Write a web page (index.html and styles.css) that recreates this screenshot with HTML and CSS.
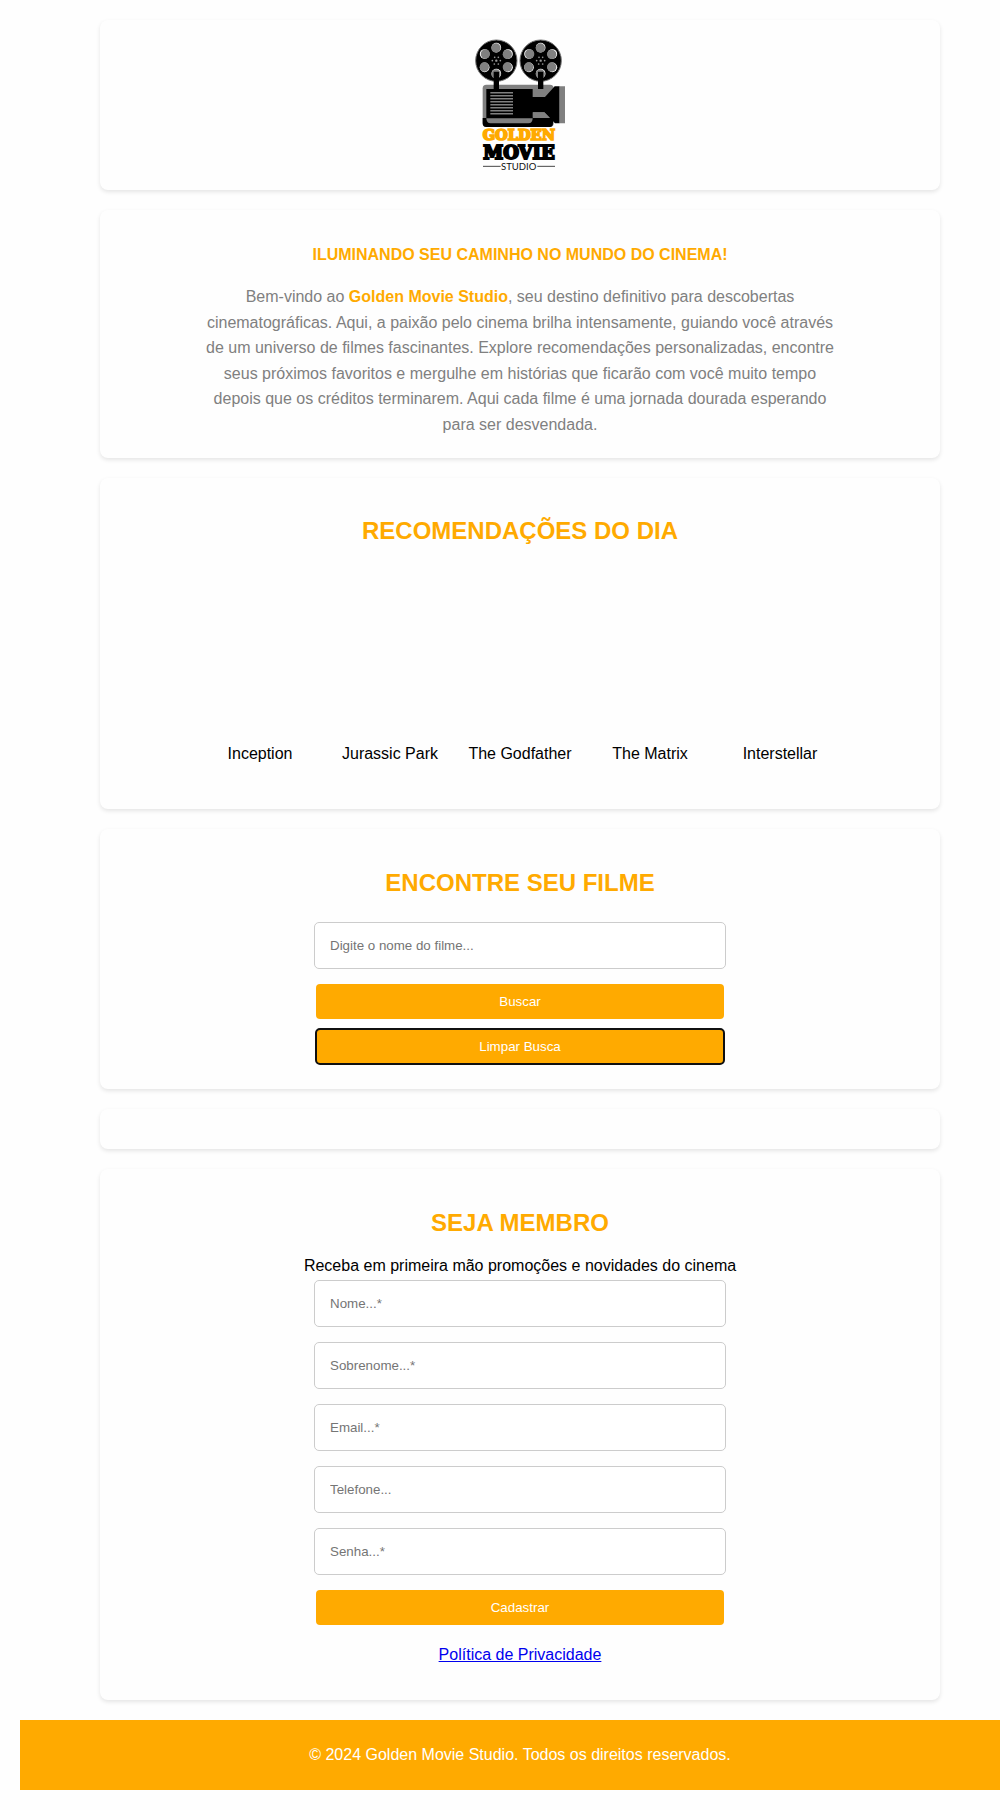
FILE: index.html
```html
<!DOCTYPE html>
<html lang="pt-BR">
<head>
<meta charset="utf-8">
<title>Golden Movie Studio</title>
<link rel="stylesheet" href="styles.css">
</head>
<body>
<div class="page">
  <header class="card card-logo">
    <svg class="logo" viewBox="0 0 360 450" role="img" aria-label="Golden Movie Studio">
      <defs>
        <g id="reel">
          <circle r="62" fill="#000" stroke="#777" stroke-width="3"/>
          <g fill="#fff">
            <circle cy="-39" r="14.5"/><circle cy="39" r="14.5"/>
            <circle cx="35" cy="-20" r="14.5"/><circle cx="-35" cy="-20" r="14.5"/>
            <circle cx="35" cy="20" r="14.5"/><circle cx="-35" cy="20" r="14.5"/>
          </g>
          <g fill="#808080">
            <circle cx="-1" cy="-38" r="14"/><circle cx="-1" cy="40" r="14"/>
            <circle cx="33" cy="-19" r="14"/><circle cx="-33" cy="-20" r="14"/>
            <circle cx="33" cy="19" r="14"/><circle cx="-36" cy="19" r="14"/>
          </g>
          <g fill="#999">
            <circle cx="-5" cy="-10" r="2.5"/><circle cx="6" cy="-10" r="2.5"/>
            <circle cx="-12" r="2.5"/><circle cx="12" r="2.5"/><circle r="3.5"/>
            <circle cx="-6" cy="10" r="2.5"/><circle cx="6" cy="10" r="2.5"/>
          </g>
        </g>
      </defs>
      <rect x="68" y="164" width="213" height="127" rx="11" fill="#808080"/>
      <use href="#reel" x="109" y="92"/>
      <use href="#reel" x="242" y="92"/>
      <path d="M101 125h16v52h-16zM234 125h16v52h-16z"/>
      <path d="M79 177h139v24h37l29-32h15v111h-14l-32-33h-35v16h61v16q0 12-10 12H79q-11 0-11-12v-15h11z"/>
      <path d="M79 265h139q0 15-13 15H92q-13 0-13-15z" fill="#808080"/>
      <path d="M299 169h16v111h-16zM219 247h34l17 17h-51z" fill="#808080"/>
      <path d="M91 188h68M91 197h68M91 206h68M91 215h68M91 224h68M91 233h68M91 242h68M91 251h68" stroke="#808080" stroke-width="4.5"/>
      <text class="logo-slab logo-gold" x="68" y="331" textLength="217" lengthAdjust="spacingAndGlyphs">GOLDEN</text>
      <text class="logo-slab logo-black" x="70" y="386" textLength="214" lengthAdjust="spacingAndGlyphs">MOVIE</text>
      <text class="logo-small" x="123" y="419" textLength="106" lengthAdjust="spacingAndGlyphs">STUDIO</text>
      <path d="M69 409h53M232 409h53" stroke="#222" stroke-width="2.5"/>
    </svg>
  </header>

  <section class="card card-intro">
    <h1 class="slogan">ILUMINANDO SEU CAMINHO NO MUNDO DO CINEMA!</h1>
    <p class="intro">Bem-vindo ao <strong class="brand">Golden Movie Studio</strong>, seu destino definitivo para descobertas cinematográficas. Aqui, a paixão pelo cinema brilha intensamente, guiando você através de um universo de filmes fascinantes. Explore recomendações personalizadas, encontre seus próximos favoritos e mergulhe em histórias que ficarão com você muito tempo depois que os créditos terminarem. Aqui cada filme é uma jornada dourada esperando para ser desvendada.</p>
  </section>

  <section class="card card-movies">
    <h2 class="title title-movies">RECOMENDAÇÕES DO DIA</h2>
    <ul class="movies">
      <li class="movie">Inception</li>
      <li class="movie">Jurassic Park</li>
      <li class="movie">The Godfather</li>
      <li class="movie">The Matrix</li>
      <li class="movie">Interstellar</li>
    </ul>
  </section>

  <section class="card card-search">
    <h2 class="title">ENCONTRE SEU FILME</h2>
    <form class="form form-search">
      <input class="field" type="text" placeholder="Digite o nome do filme...">
      <button class="button" type="button">Buscar</button>
      <button class="button button-focused" type="button">Limpar Busca</button>
    </form>
  </section>

  <section class="card card-results"></section>

  <section class="card card-member">
    <h2 class="title">SEJA MEMBRO</h2>
    <p class="lead">Receba em primeira mão promoções e novidades do cinema</p>
    <form class="form">
      <input class="field" type="text" placeholder="Nome...*">
      <input class="field" type="text" placeholder="Sobrenome...*">
      <input class="field" type="email" placeholder="Email...*">
      <input class="field" type="tel" placeholder="Telefone...">
      <input class="field" type="password" placeholder="Senha...*">
      <button class="button" type="button">Cadastrar</button>
    </form>
    <a class="privacy" href="#">Política de Privacidade</a>
  </section>

  <footer class="footer">© 2024 Golden Movie Studio. Todos os direitos reservados.</footer>
</div>
</body>
</html>
```

FILE: styles.css
```css
* {
  box-sizing: border-box;
}

body {
  margin: 0;
  padding: 20px 0 20px 20px;
  background: #fefefe;
  color: #000;
  font: 16px/18px "Liberation Sans", Arial, sans-serif;
  overflow-x: hidden;
}

.page {
  width: 1000px;
  display: flex;
  flex-direction: column;
  align-items: center;
  gap: 20px;
}

.card {
  width: 840px;
  padding: 20px;
  border-radius: 8px;
  background: #fefefe;
  box-shadow: 0 2px 4px rgba(0, 0, 0, 0.1);
  display: flex;
  flex-direction: column;
  align-items: center;
  text-align: center;
}

.card-logo { height: 170px; padding: 10px; }
.card-intro { height: 248px; }
.card-movies { height: 331px; }
.card-search { height: 260px; }
.card-results { height: 40px; }
.card-member { height: 531px; }

.logo {
  width: 120px;
  height: 150px;
}

.logo-slab {
  font-family: "DejaVu Serif", serif;
  font-weight: bold;
  stroke-linejoin: miter;
}

.logo-gold {
  font-size: 42px;
  fill: #ffaa00;
  stroke: #ffaa00;
  stroke-width: 5px;
}

.logo-black {
  font-size: 53px;
  fill: #000;
  stroke: #000;
  stroke-width: 6px;
}

.logo-small {
  font-family: Lato, sans-serif;
  font-size: 30px;
  fill: #111;
}

.slogan {
  margin: 16px 0 20px;
  font-size: 16px;
  line-height: 18px;
  color: #ffaa00;
}

.intro {
  width: 640px;
  margin: 0;
  line-height: 25.6px;
  color: #808080;
}

.brand {
  color: #ffaa00;
}

.title {
  margin: 20px 0;
  font-size: 24px;
  line-height: 27px;
  color: #ffaa00;
}

.title-movies {
  margin: 19px 0 21px;
}

.movies {
  display: flex;
  gap: 10px;
  margin: 0;
  padding: 180px 0 0;
  list-style: none;
}

.movie {
  width: 120px;
}

.form {
  width: 412px;
  display: flex;
  flex-direction: column;
  align-items: center;
  gap: 15px;
}

.form-search {
  margin-top: 6px;
}

.field {
  width: 412px;
  height: 47px;
  margin: 0;
  padding: 0 15px;
  border: 1px solid #ccc;
  border-radius: 5px;
  background: #fff;
  font: 13.333px "Liberation Sans", Arial, sans-serif;
}

.field::placeholder {
  color: #757575;
}

.button {
  width: 408px;
  height: 35px;
  margin: 0;
  padding: 0;
  border: 0;
  border-radius: 4px;
  background: #ffaa00;
  color: #fff;
  font: 13.333px "Liberation Sans", Arial, sans-serif;
}

.button-focused {
  margin-top: -5px;
  outline: 2px solid #101010;
  outline-offset: -1px;
}

.lead {
  margin: 1px 0 5px;
}

.privacy {
  margin-top: 21px;
  color: #0000ee;
}

.footer {
  width: 1000px;
  height: 70px;
  background: #ffaa00;
  color: #fff;
  text-align: center;
  line-height: 70px;
}
```
